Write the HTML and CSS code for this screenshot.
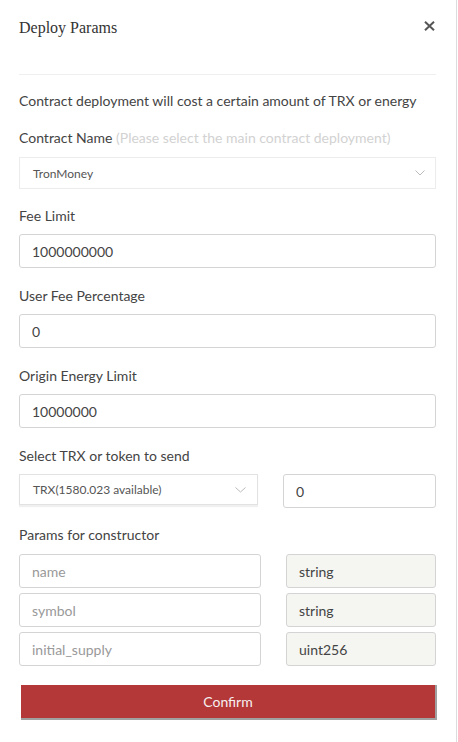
FILE: index.html
```html
<!DOCTYPE html>
<html>
<head>
<meta charset="utf-8">
<link rel="stylesheet" href="styles.css">
</head>
<body>
<div class="modal">
  <div class="header">
    <div class="title">Deploy Params</div>
    <svg class="close" width="11" height="10" viewBox="0 0 11 10"><path d="M1 0.8 L10 9.2 M10 0.8 L1 9.2" stroke="#555" stroke-width="2" fill="none"/></svg>
  </div>
  <div class="divider"></div>
  <div class="body">
    <div class="desc">Contract deployment will cost a certain amount of TRX or energy</div>
    <div class="field field--tight field--select">
      <div class="label">Contract Name <span class="hint">(Please select the main contract deployment)</span></div>
      <div class="select select--name">
        <span>TronMoney</span>
        <svg width="10" height="6" viewBox="0 0 10 6"><path d="M0.5 0.5 L5 5 L9.5 0.5" stroke="#bbb" stroke-width="1" fill="none"/></svg>
      </div>
    </div>
    <div class="field">
      <div class="label">Fee Limit</div>
      <input class="input" type="text" value="1000000000">
    </div>
    <div class="field">
      <div class="label">User Fee Percentage</div>
      <input class="input" type="text" value="0">
    </div>
    <div class="field">
      <div class="label">Origin Energy Limit</div>
      <input class="input" type="text" value="10000000">
    </div>
    <div class="field field--tight">
      <div class="label">Select TRX or token to send</div>
      <div class="token-row">
        <div class="select select--token">
          <span>TRX(1580.023 available)</span>
          <svg width="11" height="6" viewBox="0 0 11 6"><path d="M0.5 0.5 L5.5 5 L10.5 0.5" stroke="#bbb" stroke-width="1" fill="none"/></svg>
        </div>
        <input class="input" type="text" value="0">
      </div>
    </div>
    <div class="field field--params">
      <div class="label">Params for constructor</div>
      <div class="params">
        <div class="param-row">
          <input class="input" type="text" placeholder="name">
          <input class="input input--type" type="text" value="string" readonly>
        </div>
        <div class="param-row">
          <input class="input" type="text" placeholder="symbol">
          <input class="input input--type" type="text" value="string" readonly>
        </div>
        <div class="param-row">
          <input class="input" type="text" placeholder="initial_supply">
          <input class="input input--type" type="text" value="uint256" readonly>
        </div>
      </div>
    </div>
    <button class="confirm" type="button">Confirm</button>
  </div>
</div>
</body>
</html>
```

FILE: styles.css
```css
html, body {
  margin: 0;
  padding: 0;
  background: #fff;
}

body {
  font-family: Lato, "Open Sans", sans-serif;
  color: #444;
}

.modal {
  width: 456px;
  height: 742px;
  border-right: 1px solid #dcdcdc;
  background: #fff;
}

.header {
  display: flex;
  justify-content: space-between;
  align-items: flex-start;
  padding: 18px 21px 0 19px;
  height: 20px;
}

.title {
  font-family: "Liberation Serif", "Times New Roman", serif;
  font-size: 16px;
  line-height: 20px;
  color: #333;
}

.close {
  display: block;
  margin-top: 3px;
}

.divider {
  margin: 36px 20px 0 19px;
  border-top: 1px solid #efefef;
}

.body {
  padding: 16px 20px 0 19px;
  display: flex;
  flex-direction: column;
}

.desc {
  font-size: 14px;
  line-height: 20px;
  margin-bottom: 17px;
  color: #444;
}

.field {
  display: flex;
  flex-direction: column;
  gap: 8px;
  margin-bottom: 18px;
}

.field--tight {
  margin-bottom: 17px;
}

.field--select {
  gap: 9px;
}

.field--params {
  gap: 9px;
  margin-bottom: 19px;
}

.label {
  font-size: 14px;
  line-height: 20px;
  color: #444;
}

.hint {
  color: #d2d2d2;
}

.select {
  box-sizing: border-box;
  display: flex;
  justify-content: space-between;
  align-items: center;
  font-size: 12px;
  color: #555;
  background: #fff;
}

.select svg {
  display: block;
}

.select--name {
  height: 32px;
  padding: 0 10px 0 13px;
  border: 1px solid #ececec;
}

.select--token {
  height: 31px;
  padding: 0 11px 0 13px;
  border: 1px solid #e2e2e2;
  box-shadow: 0 2px 1px rgba(0, 0, 0, 0.06);
}

.input {
  box-sizing: border-box;
  width: 100%;
  height: 34px;
  margin: 0;
  padding: 0 12px;
  border: 1px solid #d4d4d4;
  border-radius: 3px;
  font-family: Lato, "Open Sans", sans-serif;
  font-size: 14px;
  color: #444;
  background: #fff;
  outline: none;
}

.input::placeholder {
  color: #999;
}

.input--type {
  background: #f5f5f2;
  color: #444;
}

.token-row {
  display: grid;
  grid-template-columns: 239px 1fr;
  column-gap: 25px;
  align-items: start;
}

.params {
  display: flex;
  flex-direction: column;
  gap: 5px;
}

.param-row {
  display: grid;
  grid-template-columns: 242px 150px;
  column-gap: 25px;
}

.confirm {
  box-sizing: border-box;
  width: 416px;
  height: 35px;
  margin: 0 0 0 2px;
  padding: 0;
  border: none;
  border-right: 2px solid #a0a0a0;
  border-bottom: 2px solid #a0a0a0;
  background: #b43838;
  color: #f6f0f0;
  font-family: Lato, "Open Sans", sans-serif;
  font-size: 14px;
  line-height: 33px;
  text-align: center;
}
```
